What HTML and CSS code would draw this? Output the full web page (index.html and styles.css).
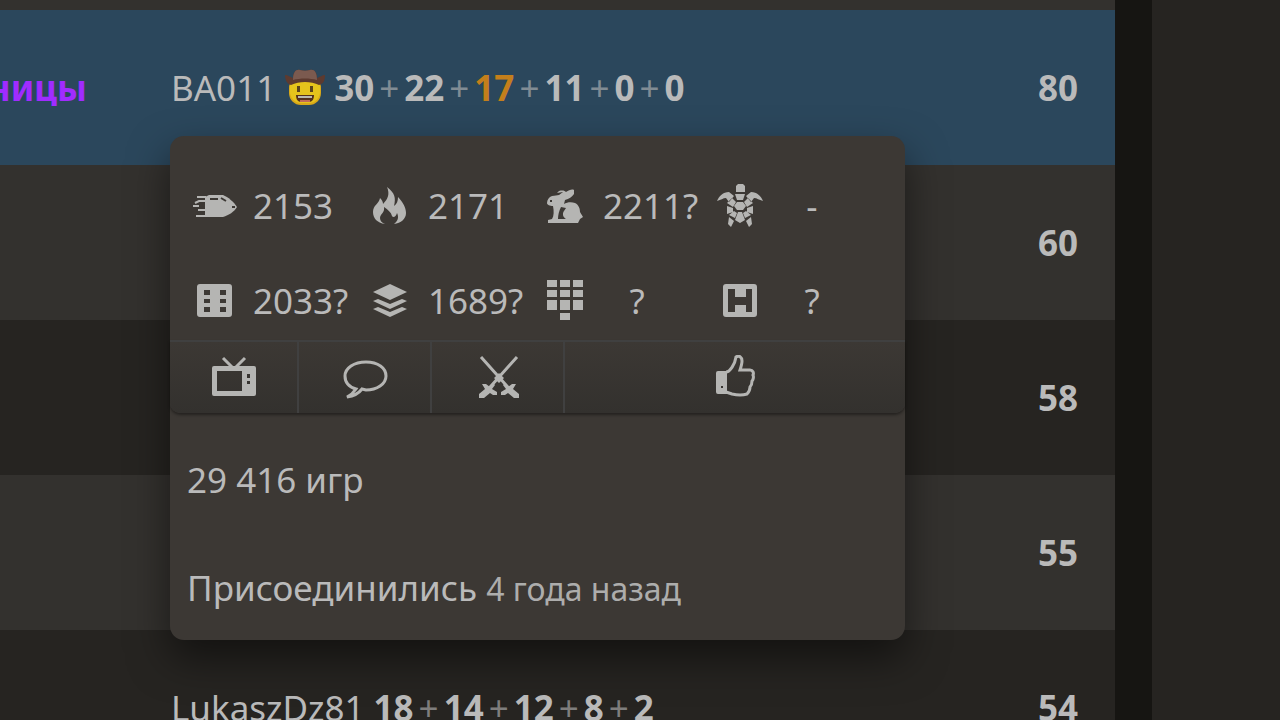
FILE: index.html
```html
<!DOCTYPE html>
<html lang="ru">
<head>
<meta charset="utf-8">
<title>Турнир</title>
<link rel="stylesheet" href="styles.css">
</head>
<body>
<div class="page">
  <main class="standing">
    <table class="teams">
      <colgroup><col class="col-team"><col class="col-players"><col class="col-total"></colgroup>
      <tbody>
        <tr class="edge"><td></td><td></td><td></td></tr>
        <tr class="mine">
          <td><div class="team">ницы</div></td>
          <td class="players">
            <div class="player">
              <a class="name" href="#">BA011</a>
              <svg class="flair" viewBox="0 0 40 40" role="img" aria-label="Ковбой">
                <rect x="4" y="8" width="32" height="29" rx="12" fill="#d9a818"/>
                <rect x="5" y="8" width="30" height="27" rx="11" fill="#e6c31c"/>
                <path d="M0 7c3 0 5 2 8 3C8 4 11 1 15 2c3 1 7 1 10 0 4-1 7 2 7 8 3-1 5-3 8-3 0 6-2 9-6 10-8-4-20-4-28 0C2 16 0 12 0 7z" fill="#5d3a2f"/>
                <path d="M8 12C8 4 11 1 15 2c3 1 7 1 10 0 4-1 7 2 7 10-7-2-17-2-24 0z" fill="#7b5a4f"/>
                <path d="M12 18h3v6h-3zM25 18h3v6h-3z" fill="#5b431c"/>
                <path d="M11 27h18c0 3-1 7-5 7h-8c-4 0-5-4-5-7z" fill="#54301b"/>
                <path d="M13 28h14v2H13z" fill="#b9b7ae"/>
                <path d="M15 32h10v2H15z" fill="#c56b57"/>
              </svg>
              <span class="scores"><b>30</b><i>+</i><b>22</b><i>+</i><b class="double">17</b><i>+</i><b>11</b><i>+</i><b>0</b><i>+</i><b>0</b></span>
            </div>

            <section class="powertip" aria-label="BA011">
              <div class="ratings">
                <div class="rating">
                  <svg class="icon" viewBox="0 0 46 46"><path d="M13 14l4-2h14c5 2 11 7 14 12-3 5-8 8-14 10H13z"/><path class="cut" d="M18 16h8M29 15l5 3M40 24h3"/><path class="line" d="M5 14h9M1 23h6M3 20l4-2h6M6 27h7M4 33h10"/></svg>
                  <span>2153</span>
                </div>
                <div class="rating">
                  <svg class="icon" viewBox="0 0 46 46"><path d="M20 4c8 6 9 11 7 19 3-2 4-5 4-9 5 5 8 11 8 16 0 6-5 10-12 11 4-3 5-7 3-11-1 4-4 5-5 3-1-4-4-6-8-9 1 6-4 7-4 11 0 3 2 5 5 6-8-1-12-6-12-12 0-7 6-8 7-14 2 2 3 4 3 6 5-5 7-10 4-17z"/></svg>
                  <span>2171</span>
                </div>
                <div class="rating">
                  <svg class="icon" viewBox="0 0 46 46"><path fill-rule="evenodd" d="M17 8c4-1 6 0 7 1 3-2 6-3 8-2v4c-2 3-5 5-9 6l-1 4c3-2 8-2 11-1 4 2 5 6 5 9l3 5-3 2-2 4H6v-3l4-1c2-3 2-8 1-13-3 0-6-1-6-3 0-3 2-6 5-7 3 0 5-1 7-1l4-3-6 1zM19 24c-2 4-3 8-3 12h8c-3-2-4-5-2-8l2-3zM8 17v2h2v-2z"/></svg>
                  <span>2211?</span>
                </div>
                <div class="rating">
                  <svg class="icon" viewBox="0 0 46 46"><path d="M19 3l2-2h5l2 2v6H19zM17 13l-5-4c-6 0-10 4-12 9 4-1 6-3 9-3l3 4zM29 13l5-4c6 0 10 4 12 9-4-1-6-3-9-3l-3 4zM18 11h10l-2 6h-6zM15 15l4 4-3 5-6-4zM31 15l-4 4 3 5 6-4zM20 19h6l3 4-3 4h-6l-3-4zM10 23l6 2v4l-6 2zM36 23l-6 2v4l6 2zM17 28l3 2-2 5-6-3zM29 28l-3 2 2 5 6-3zM21 29h4l3 8-5 3-5-3zM12 34l5 4-3 6-3-3zM34 34l-5 4 3 6 3-3z"/></svg>
                  <span>-</span>
                </div>
                <div class="rating">
                  <svg class="icon" viewBox="0 0 46 46"><path fill-rule="evenodd" d="M8 6h29q3 0 3 3v27q0 3-3 3H8q-3 0-3-3V9q0-3 3-3zM12 12v5h6v-5zM28 12v5h6v-5zM12 21v4h6v-4zM28 21v4h6v-4zM12 29v5h6v-5zM28 29v5h6v-5z"/></svg>
                  <span>2033?</span>
                </div>
                <div class="rating">
                  <svg class="icon" viewBox="0 0 46 46"><path d="M23 6l17 8-17 8-17-8zM6 23l5-2 12 5 12-5 5 2-17 8zM6 31l5-2 12 5 12-5 5 2-17 8z"/></svg>
                  <span>1689?</span>
                </div>
                <div class="rating">
                  <svg class="icon" viewBox="0 0 46 46"><path d="M5 2h10v7H5zM18 2h10v7H18zM31 2h10v7H31zM5 12h10v7H5zM18 12h10v7H18zM31 12h10v7H31zM5 22h10v10H5zM18 22h10v10H18zM31 22h10v10H31zM18 35h10v7H18z"/></svg>
                  <span>?</span>
                </div>
                <div class="rating">
                  <svg class="icon" viewBox="0 0 46 46"><path fill-rule="evenodd" d="M9 6h28q3 0 3 3v27q0 3-3 3H9q-3 0-3-3V9q0-3 3-3zM11 11v23h7v-7h11v7h6V11h-6v8H18v-8z"/></svg>
                  <span>?</span>
                </div>
              </div>

              <nav class="actions">
                <a href="#" aria-label="Смотреть партии"><svg class="icon" viewBox="0 0 46 46"><path fill-rule="evenodd" d="M3 11h40q2 0 2 2v26q0 2-2 2H3q-2 0-2-2V13q0-2 2-2zM6 16v20h25V16zM36 19v4h3v-4zM36 26v3h3v-3z"/><path class="line wide" d="M12 3l9 9M34 3l-9 9"/></svg></a>
                <a href="#" aria-label="Сообщение"><svg class="icon" viewBox="0 0 46 46"><path class="line wide" d="M14 34C7 32 3 27 3 21 3 13 12 7 24 7s20 6 20 14-9 14-20 14l-4-1c-3 4-8 7-15 8 4-2 7-5 9-8z"/></svg></a>
                <a href="#" aria-label="Вызвать на партию"><svg class="icon" viewBox="0 0 46 46"><path class="line wide" d="M6 2l34 38M42 2L8 40"/><path d="M24 18l5 5-5 5-5-5zM4 43v-4l6-5-3-5h4l4 3 3-4 2 2-3 4 5 3v3h-4l-3-2-6 5zM44 43v-4l-6-5 3-5h-4l-4 3-3-4-2 2 3 4-5 3v3h4l3-2 6 5z"/></svg></a>
                <button type="button" aria-label="Подписаться"><svg class="icon" viewBox="0 0 46 46"><path fill-rule="evenodd" d="M6 16h9v23H6q-2 0-2-2V18q0-2 2-2zM9 31v2h2v-2z"/><path class="line wide" d="M14 17c4 0 9-8 10-15 3-2 6 0 6 4 0 3-1 6-2 9h10c3 0 4 3 3 5 1 2 0 5-1 6 0 3-1 5-2 6 0 3-1 5-3 7-6 2-11 1-15 0l-6-2"/></svg></button>
              </nav>

              <div class="about">
                <p>29&nbsp;416 игр</p>
                <p>Присоединились <time>4 года назад</time></p>
              </div>
            </section>
          </td>
          <td class="total">80</td>
        </tr>
        <tr><td></td><td></td><td class="total">60</td></tr>
        <tr><td></td><td></td><td class="total">58</td></tr>
        <tr><td></td><td></td><td class="total">55</td></tr>
        <tr>
          <td></td>
          <td class="players">
            <div class="player">
              <a class="name" href="#">LukaszDz81</a>
              <span class="scores"><b>18</b><i>+</i><b>14</b><i>+</i><b>12</b><i>+</i><b>8</b><i>+</i><b>2</b></span>
            </div>
          </td>
          <td class="total">54</td>
        </tr>
      </tbody>
    </table>
  </main>
  <aside class="side"></aside>
</div>
</body>
</html>
```
FILE: styles.css
```css
* {
  box-sizing: border-box;
}

body {
  margin: 0;
  background: #161512;
  color: #bababa;
  font: 35px/54px "Noto Sans", sans-serif;
}

a {
  color: inherit;
  text-decoration: none;
}

.page {
  display: flex;
  gap: 37px;
  height: 100vh;
  overflow: hidden;
}

.standing {
  flex: 1;
  min-width: 0;
}

.side {
  flex: 0 0 10%;
  background: #262421;
}

.teams {
  width: 100%;
  table-layout: fixed;
  border-collapse: collapse;
}

.col-team {
  width: 170px;
}

.col-total {
  width: 140px;
}

.teams td {
  height: 155px;
  padding: 0;
  vertical-align: middle;
}

.teams tr {
  background: #262421;
}

.teams tr:nth-child(odd) {
  background: #33312e;
}

.teams .edge td {
  height: 10px;
}

.teams .mine {
  background: #2b475c;
}

.team {
  display: flex;
  justify-content: flex-end;
  width: 87px;
  overflow: hidden;
  color: #a02cff;
  font-weight: 700;
}

.players {
  position: relative;
}

.player {
  display: flex;
  align-items: center;
  padding-left: 1px;
  white-space: nowrap;
}

.flair {
  width: 40px;
  height: 40px;
  margin-left: 9px;
}

.scores {
  margin-left: 9px;
}

.scores i {
  padding: 0 5px;
  font-style: normal;
  opacity: 0.6;
}

.double {
  color: #c47f1b;
}

.teams .total {
  padding-right: 37px;
  text-align: right;
  font-weight: 700;
}

.powertip {
  position: absolute;
  z-index: 2;
  top: 126px;
  left: 0;
  width: 735px;
  border-radius: 14px;
  background: #3c3834;
  box-shadow: 0 18px 40px rgba(0, 0, 0, 0.5);
}

.ratings {
  display: grid;
  grid-template-columns: repeat(4, 175px);
  grid-auto-rows: 95px;
  align-items: center;
  padding: 22px 0 0 22px;
  height: 204px;
}

.rating {
  display: flex;
  align-items: center;
  gap: 15px;
}

.rating span {
  min-width: 68px;
  text-align: center;
}

.icon {
  flex: none;
  display: block;
  width: 46px;
  height: 46px;
  fill: #b5b5b3;
}

.icon .line {
  fill: none;
  stroke: #b5b5b3;
  stroke-width: 2;
}

.icon .wide {
  stroke-width: 3;
}

.icon .cut {
  fill: none;
  stroke: #3c3834;
  stroke-width: 2;
}

.actions {
  display: grid;
  grid-template-columns: 129px 133px 133px 1fr;
  height: 73px;
  border-top: 2px solid #404040;
  border-radius: 0 0 10px 10px;
  background: linear-gradient(#3c3834, #33312e);
  box-shadow: 0 2px 3px rgba(0, 0, 0, 0.4);
}

.actions a,
.actions button {
  display: flex;
  align-items: center;
  justify-content: center;
  margin: 0;
  padding: 0;
  border: 0;
  border-right: 2px solid #404040;
  background: none;
}

.actions button {
  border-right: 0;
}

.about {
  display: grid;
  gap: 54px;
  padding: 40px 17px 24px;
}

.about p {
  margin: 0;
}

.about time {
  font-size: 32px;
  opacity: 0.9;
}
```
